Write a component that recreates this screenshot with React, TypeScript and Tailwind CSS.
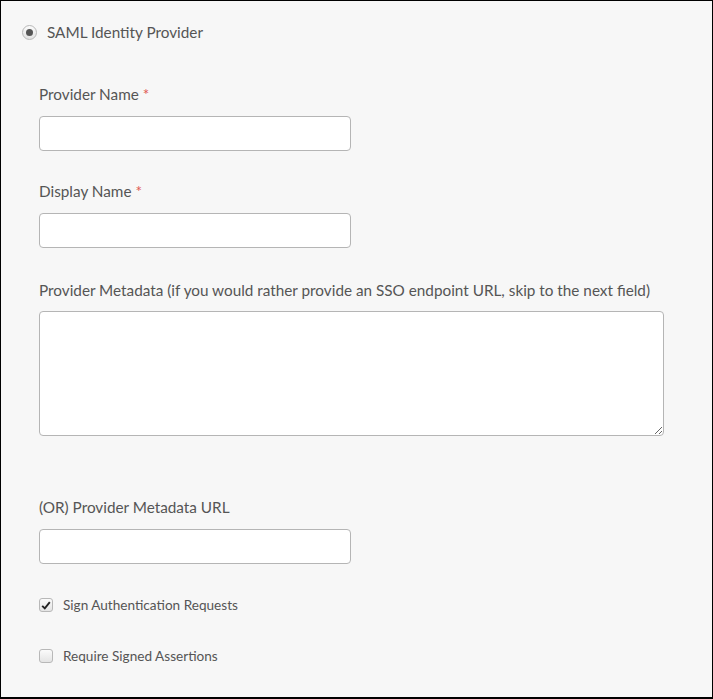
import React from "react";

function Label({ text, required }: { text: string; required?: boolean }) {
    return (
        <div className="h-6 leading-6 text-[15.3px] text-[#555555]">
            {text}
            {required && <span className="ml-1 text-[#e0564f]">*</span>}
        </div>
    );
}

function TextInput() {
    return (
        <input
            type="text"
            className="mt-[10px] block h-[35px] w-[312px] rounded-[4px] border border-[#b5b5b5] bg-white outline-none"
        />
    );
}

function Checkbox({ checked, text }: { checked?: boolean; text: string }) {
    return (
        <div className="flex h-5 items-center">
            <span className="flex h-[14px] w-[14px] items-center justify-center rounded-[3px] border border-[#b8b8b8] bg-gradient-to-b from-[#fbfbfb] to-[#e4e4e4]">
                {checked && (
                    <svg width="10" height="9" viewBox="0 0 10 9">
                        <path d="M1.2 4.8 L3.8 7.4 L8.8 1.2" fill="none" stroke="#222" strokeWidth="1.9" />
                    </svg>
                )}
            </span>
            <span className="ml-[10px] text-[13.6px] text-[#555555]">{text}</span>
        </div>
    );
}

export default function App() {
    return (
        <div
            className="h-[699px] w-[713px] border border-b-2 border-black bg-[#f7f7f7]"
            style={{ fontFamily: "Lato, 'Open Sans', sans-serif" }}
        >
            <div className="mt-[19px] flex h-6 items-center pl-[21px]">
                <span className="flex h-[15px] w-[15px] items-center justify-center rounded-full border border-[#b8b8b8] bg-gradient-to-b from-[#fbfbfb] to-[#e2e2e2]">
                    <span className="h-[7px] w-[7px] rounded-full bg-[#555555]" />
                </span>
                <span className="ml-[10px] text-[15.3px] text-[#555555]">SAML Identity Provider</span>
            </div>

            <div className="pl-[38px]">
                <div className="mt-[38px]">
                    <Label text="Provider Name" required />
                    <TextInput />
                </div>
                <div className="mt-[28px]">
                    <Label text="Display Name" required />
                    <TextInput />
                </div>
                <div className="mt-[30px]">
                    <Label text="Provider Metadata (if you would rather provide an SSO endpoint URL, skip to the next field)" />
                    <textarea className="mt-[9px] block h-[125px] w-[625px] rounded-[4px] border border-[#b5b5b5] bg-white outline-none" />
                </div>
                <div className="mt-[59px]">
                    <Label text="(OR) Provider Metadata URL" />
                    <TextInput />
                </div>
                <div className="mt-[31px]">
                    <Checkbox checked text="Sign Authentication Requests" />
                </div>
                <div className="mt-[31px]">
                    <Checkbox text="Require Signed Assertions" />
                </div>
            </div>
        </div>
    );
}
